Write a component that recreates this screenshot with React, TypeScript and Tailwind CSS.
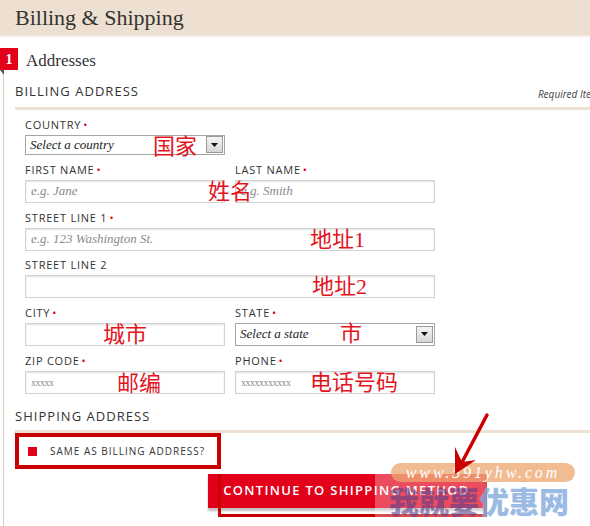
import React from "react";

const serif = { fontFamily: '"Liberation Serif", "Noto Sans CJK SC", serif' };

const Label = ({ text, req = true }: { text: string; req?: boolean }) => (
  <div className="mb-[3px] h-[14px] text-[11px] leading-[14px] tracking-[0.07em] text-[#333]">
    {text}
    {req && <span className="ml-[2px] text-[#e3001b]">•</span>}
  </div>
);

const Note = ({ text, className }: { text: string; className: string }) => (
  <span
    className={`pointer-events-none absolute text-[22px] leading-[24px] text-[#e3141e] ${className}`}
    style={serif}
  >
    {text}
  </span>
);

const Field = ({ ph, small, w }: { ph?: string; small?: boolean; w: string }) => (
  <input
    readOnly
    placeholder={ph}
    className={`block ${w} h-[23px] border border-[#d2d2d2] bg-white px-[5px] shadow-[inset_0_1px_2px_rgba(0,0,0,0.12)] outline-none placeholder:text-[#8a8a8a] ${
      small ? "text-[10px] placeholder:tracking-[-0.05em]" : "text-[13px] placeholder:italic"
    }`}
    style={serif}
  />
);

const Select = ({ text, h }: { text: string; h: string }) => (
  <div className={`flex w-[200px] ${h} items-center justify-between border border-[#a5a5a5] bg-white pl-[4px] pr-[1px]`}>
    <span className="text-[13px] italic text-[#222]" style={serif}>
      {text}
    </span>
    <span className="flex h-[17px] w-[17px] items-center justify-center border border-[#9a9a9a] bg-gradient-to-b from-[#f4f4f4] to-[#d6d6d6]">
      <svg width="7" height="4" viewBox="0 0 7 4">
        <path d="M0 0h7L3.5 4z" fill="#111" />
      </svg>
    </span>
  </div>
);

export default function App() {
  return (
    <div
      className="relative h-[526px] w-[590px] overflow-hidden bg-white text-[#333]"
      style={{ fontFamily: '"Open Sans", "Noto Sans CJK SC", sans-serif' }}
    >
      <div className="bg-[#ede0d0]">
        <div className="h-[35px] pl-[15px] text-[22px] leading-[35px] text-[#333]" style={serif}>
          Billing &amp; Shipping
        </div>
        <div className="h-[2px] bg-[#f4ece2]" />
      </div>

      <div className="ml-[3px] border-l border-[#d6cdbf] pb-[20px]">
        <div className="relative mt-[11px] flex h-[22px] items-center">
          <div
            className="-ml-[4px] flex h-[22px] w-[18px] items-center justify-center bg-[#e3001b] text-[14px] font-bold text-white"
            style={serif}
          >
            1
          </div>
          <div className="absolute -left-[4px] top-[22px] h-0 w-0 border-l-[4px] border-t-[5px] border-l-transparent border-t-[#555]" />
          <span className="ml-[8px] mt-[4px] text-[17px] text-[#333]" style={serif}>
            Addresses
          </span>
        </div>

        <div className="mt-[12px] flex items-end justify-between pl-[11px]">
          <span className="text-[13px] tracking-[0.08em] text-[#333]">BILLING ADDRESS</span>
          <span className="mr-[-14px] text-[10px] italic text-[#444]">Required Items</span>
        </div>
        <div className="ml-[11px] mt-[5px] h-[3px] bg-[#ede1d3]" />

        <div className="mt-[8px] pl-[21px]">
          <div className="relative">
            <Label text="COUNTRY" />
            <div className="mt-[1px]">
              <Select text="Select a country" h="h-[20px]" />
            </div>
            <Note text="国家" className="left-[128px] top-[17px]" />
          </div>

          <div className="relative mt-[8px] flex gap-[10px]">
            <div>
              <Label text="FIRST NAME" />
              <Field w="w-[200px]" ph="e.g. Jane" />
            </div>
            <div>
              <Label text="LAST NAME" />
              <Field w="w-[200px]" ph="e.g. Smith" />
            </div>
            <Note text="姓名" className="left-[183px] top-[17px]" />
          </div>

          <div className="relative mt-[8px]">
            <Label text="STREET LINE 1" />
            <Field w="w-[410px]" ph="e.g. 123 Washington St." />
            <Note text="地址1" className="left-[285px] top-[17px]" />
          </div>

          <div className="relative mt-[7px]">
            <Label text="STREET LINE 2" req={false} />
            <Field w="w-[410px]" />
            <Note text="地址2" className="left-[287px] top-[17px]" />
          </div>

          <div className="relative mt-[8px] flex gap-[10px]">
            <div>
              <Label text="CITY" />
              <Field w="w-[200px]" />
            </div>
            <div>
              <Label text="STATE" />
              <Select text="Select a state" h="h-[23px]" />
            </div>
            <Note text="城市" className="left-[78px] top-[17px]" />
            <Note text="市" className="left-[315px] top-[16px]" />
          </div>

          <div className="relative mt-[8px] flex gap-[10px]">
            <div>
              <Label text="ZIP CODE" />
              <Field w="w-[200px]" ph="xxxxx" small />
            </div>
            <div>
              <Label text="PHONE" />
              <Field w="w-[200px]" ph="xxxxxxxxxxx" small />
            </div>
            <Note text="邮编" className="left-[92px] top-[18px]" />
            <Note text="电话号码" className="left-[285px] top-[17px]" />
          </div>
        </div>

        <div className="mt-[13px] pl-[11px] text-[13px] tracking-[0.08em] text-[#333]">SHIPPING ADDRESS</div>
        <div className="ml-[11px] mt-[4px] h-[3px] bg-[#ede1d3]" />

        <div className="ml-[11px] flex h-[36px] w-[206px] items-center border-[4px] border-[#c80000] pl-[9px]">
          <span className="h-[9px] w-[9px] bg-[#e3001b]" />
          <span className="ml-[13px] text-[10px] tracking-[0.1em] text-[#333]">SAME AS BILLING ADDRESS?</span>
        </div>

        <div className="relative ml-[204px] mt-[5px] w-[279px]">
          <button className="flex h-[34px] w-[277px] items-center justify-center bg-[#e3001b] text-[13px] font-semibold tracking-[0.1em] text-white shadow-[0_3px_2px_rgba(0,0,0,0.25)]">
            CONTINUE TO SHIPPING METHOD
          </button>
          <div className="pointer-events-none absolute left-[10px] top-0 h-[43px] w-[269px] border-[3px] border-t-0 border-[#c80000]" />
        </div>
      </div>

      {/* watermark */}
      <div className="pointer-events-none absolute left-[375px] top-[474px] h-[43px] w-[112px] bg-white/30" />
      <div className="pointer-events-none absolute left-[391px] top-[463px] flex h-[19px] w-[184px] items-center justify-center rounded-full bg-[#eea56f]/75">
        <span className="text-[16px] italic tracking-[0.18em] text-white" style={serif}>
          www.591yhw.com
        </span>
      </div>
      <div
        className="pointer-events-none absolute left-[389px] top-[482px] flex text-[30px] font-black leading-[36px]"
        style={{ fontFamily: '"Noto Sans CJK SC", sans-serif' }}
      >
        <span className="text-[#5a3f8c]/60">我就要</span>
        <span className="text-[#7fa8dd]/80">优惠网</span>
      </div>
      <svg className="pointer-events-none absolute left-0 top-0" width="590" height="526">
        <path d="M487 415 L459 468" stroke="#cc0000" strokeWidth="3.5" strokeLinecap="round" />
        <path d="M455 474 L455 447 L462 462 L476 460 Z" fill="#cc0000" />
      </svg>
    </div>
  );
}
